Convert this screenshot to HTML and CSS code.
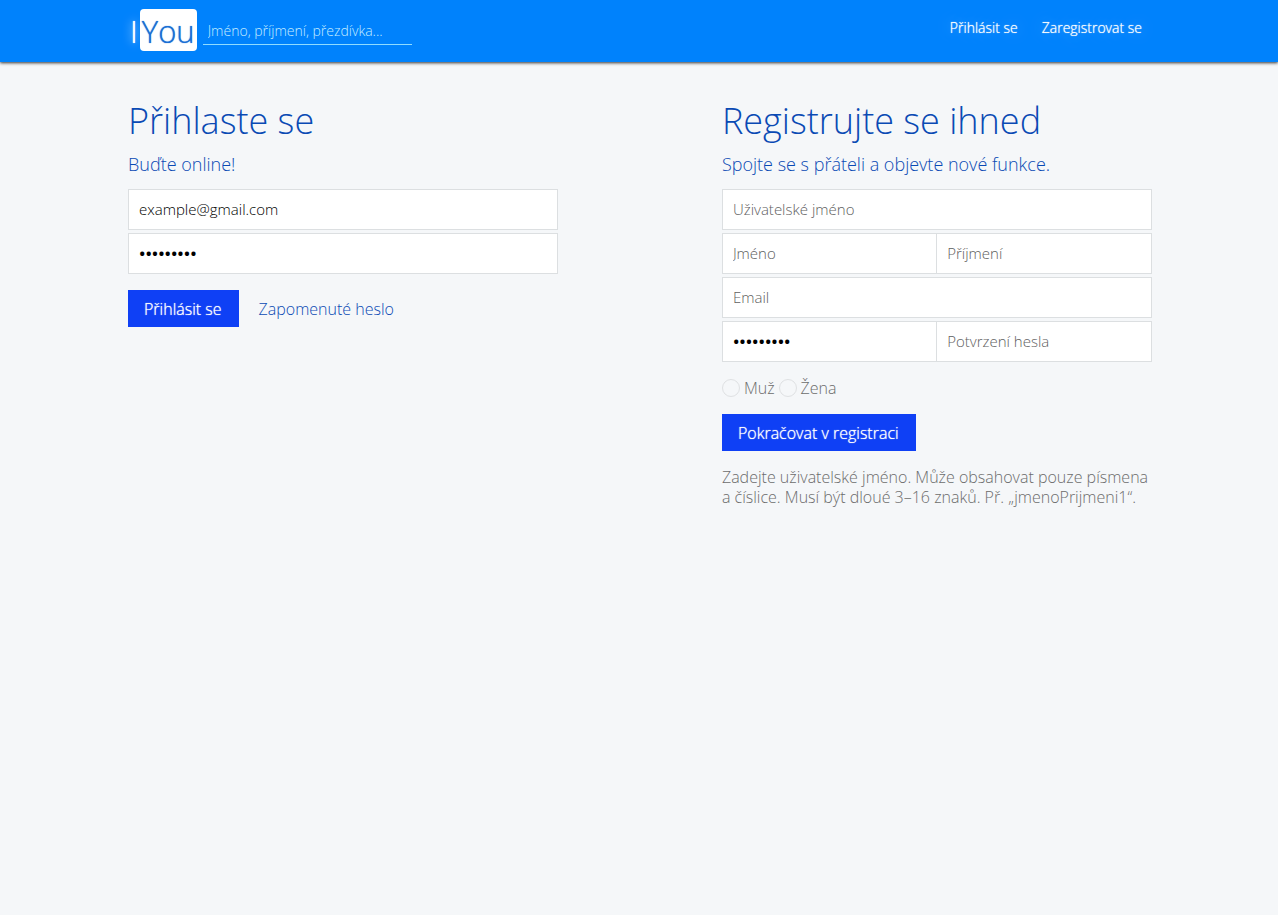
FILE: index.html
```html
<!DOCTYPE html>
<html lang="cs">
<head>
<meta charset="utf-8">
<meta name="viewport" content="width=device-width, initial-scale=1">
<title>IYou</title>
<link rel="stylesheet" href="styles.css">
</head>
<body>
<header class="topbar">
  <a class="logo" href="#"><span class="logo-i">I</span><span class="logo-you">You</span></a>
  <input class="search" type="search" placeholder="Jméno, příjmení, přezdívka..." aria-label="Hledat">
  <nav class="nav">
    <a href="#login">Přihlásit se</a>
    <a href="#register">Zaregistrovat se</a>
  </nav>
</header>
<main class="content">
  <section class="panel" id="login">
    <h1>Přihlaste se</h1>
    <h2>Buďte online!</h2>
    <form>
      <div class="fields">
        <input class="field" type="email" value="example@gmail.com" aria-label="Email">
        <input class="field filled-password" type="password" value="123456789" aria-label="Heslo">
      </div>
      <div class="actions">
        <button class="button" type="button">Přihlásit se</button>
        <a class="forgot" href="#">Zapomenuté heslo</a>
      </div>
    </form>
  </section>
  <section class="panel" id="register">
    <h1>Registrujte se ihned</h1>
    <h2>Spojte se s přáteli a objevte nové funkce.</h2>
    <form>
      <div class="fields">
        <input class="field" type="text" placeholder="Uživatelské jméno" aria-label="Uživatelské jméno">
        <div class="pair">
          <input class="field" type="text" placeholder="Jméno" aria-label="Jméno">
          <input class="field" type="text" placeholder="Příjmení" aria-label="Příjmení">
        </div>
        <input class="field" type="email" placeholder="Email" aria-label="Email">
        <div class="pair">
          <input class="field filled-password" type="password" value="123456789" aria-label="Heslo">
          <input class="field" type="password" placeholder="Potvrzení hesla" aria-label="Potvrzení hesla">
        </div>
      </div>
      <div class="gender">
        <input class="radio" type="radio" name="gender" id="male"><label for="male">Muž</label>
        <input class="radio" type="radio" name="gender" id="female"><label for="female">Žena</label>
      </div>
      <button class="button" type="button">Pokračovat v registraci</button>
      <p class="hint">Zadejte uživatelské jméno. Může obsahovat pouze písmena a číslice. Musí být dloué 3–16 znaků. Př. „jmenoPrijmeni1“.</p>
    </form>
  </section>
</main>
</body>
</html>
```
FILE: styles.css
```css
* { box-sizing: border-box; }

body {
  margin: 0;
  background: #f5f7f9;
  color: #6c6c6c;
  font: 300 16px/20px "Open Sans", "Noto Sans", sans-serif;
}

a { text-decoration: none; }

input, button { font: inherit; }

.topbar {
  display: flex;
  align-items: flex-start;
  height: 62px;
  padding: 9px 126px 0 128px;
  background: #0082fc;
  box-shadow: 0 1px 3px #333;
}

.logo {
  display: flex;
  color: #fff;
  font-size: 31px;
  line-height: 44px;
}

.logo-i {
  padding: 0 2px;
  text-shadow: 0 0 1px #fff, 0 0 10px #fff;
}

.logo-you {
  height: 42px;
  padding: 0 2px;
  border-radius: 4px;
  background: #fff;
  color: #1a6fd4;
  text-shadow: 0 0 1px #1a6fd4;
}

.search {
  width: 209px;
  height: 36px;
  margin-left: 6px;
  padding: 8px 5px 0;
  border: 0;
  border-bottom: 1px solid #8fdcff;
  border-radius: 0;
  outline: 0;
  appearance: none;
  background: transparent;
  color: #fff;
  font-size: 14px;
}

.search::placeholder { color: #c4ecff; opacity: 1; }

.nav {
  display: flex;
  gap: 24px;
  margin-left: auto;
  padding: 9px 10px 0 0;
  font-size: 14px;
}

.nav a {
  color: #fff;
  text-shadow: 0 0 1px #fff, 0 0 15px #7abfff;
}

.content {
  display: flex;
  justify-content: space-between;
  padding: 36px 126px 0 128px;
}

.panel { width: 42%; }

h1, h2 {
  margin: 0;
  color: #0a4ab4;
  font-weight: 300;
}

h1 { font-size: 36px; line-height: 46px; }

h2 { margin-top: 8px; font-size: 18px; line-height: 24px; }

.fields {
  display: flex;
  flex-direction: column;
  gap: 3px;
  margin-top: 13px;
}

.field {
  width: 100%;
  min-width: 0;
  height: 41px;
  padding: 0 10px 2px;
  border: 1px solid #dcdfe1;
  border-radius: 0;
  background: #fff;
  color: #000;
  font-size: 15px;
}

.field::placeholder { color: #606060; opacity: 1; }

.filled-password { padding-bottom: 0; font-size: 17px; font-weight: 600; }

.pair { display: flex; }

.pair .field + .field { border-left: 0; }

.actions {
  display: flex;
  align-items: center;
  gap: 20px;
  margin-top: 16px;
}

.button {
  height: 37px;
  padding: 0 17px 0 16px;
  border: 0;
  background: #0f40f5;
  color: #fff;
  text-shadow: 0 0 1px #fff;
}

.forgot { color: #0a4ab4; }

.gender {
  display: flex;
  align-items: center;
  gap: 4px;
  margin: 16px 0;
}

.radio {
  width: 18px;
  height: 18px;
  margin: 0;
  border: 1px solid #dfe1e3;
  border-radius: 50%;
  appearance: none;
}

.radio:checked { background: #0f40f5; }

.hint { margin: 16px 0 0; }
```
